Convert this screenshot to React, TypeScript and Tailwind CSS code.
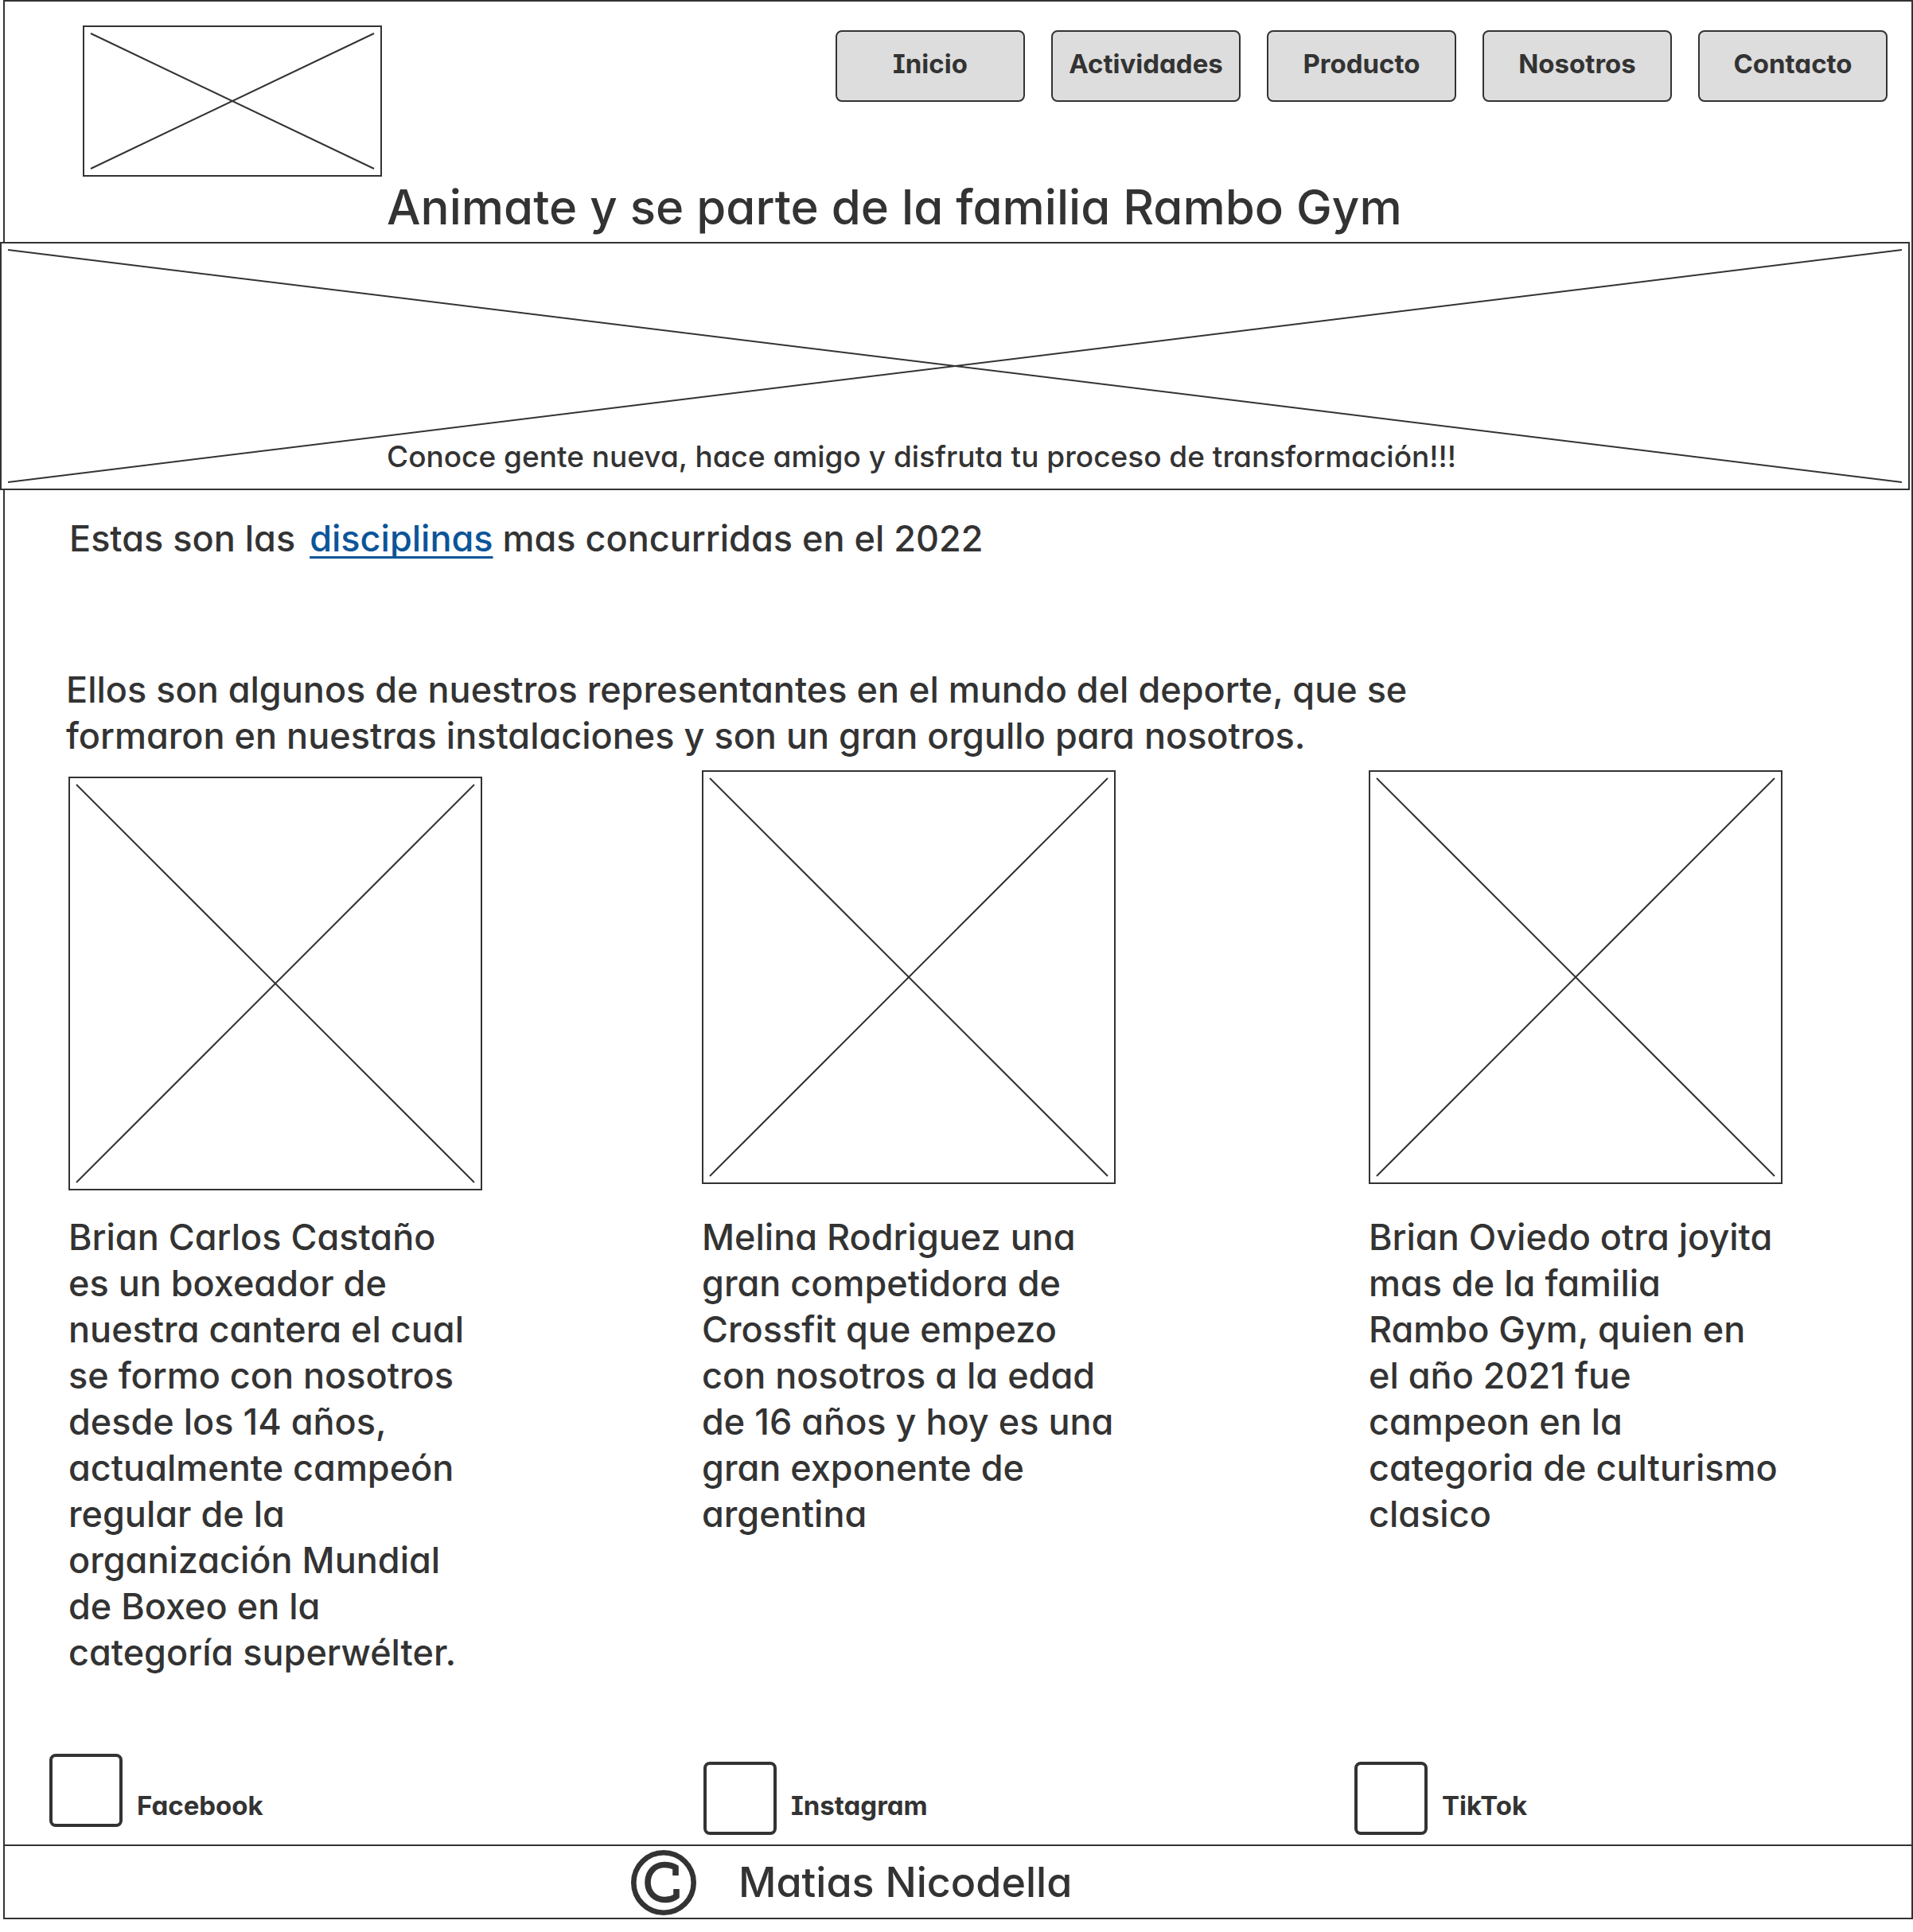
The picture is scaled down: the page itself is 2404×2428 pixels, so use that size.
import { useId } from "react";

const nav = ["Inicio", "Actividades", "Producto", "Nosotros", "Contacto"];

const athletes = [
  {
    name: "Brian Carlos Castaño",
    align: "items-end",
    lines: [
      "Brian Carlos Castaño",
      "es un boxeador de",
      "nuestra cantera el cual",
      "se formo con nosotros",
      "desde los 14 años,",
      "actualmente campeón",
      "regular de la",
      "organización Mundial",
      "de Boxeo en la",
      "categoría superwélter.",
    ],
  },
  {
    name: "Melina Rodriguez",
    align: "items-start",
    lines: [
      "Melina Rodriguez una",
      "gran competidora de",
      "Crossfit que empezo",
      "con nosotros a la edad",
      "de 16 años y hoy es una",
      "gran exponente de",
      "argentina",
    ],
  },
  {
    name: "Brian Oviedo",
    align: "items-start",
    lines: [
      "Brian Oviedo otra joyita",
      "mas de la familia",
      "Rambo Gym, quien en",
      "el año 2021 fue",
      "campeon en la",
      "categoria de culturismo",
      "clasico",
    ],
  },
];

const serifI = "[font-feature-settings:'cv11','cv08']";

function Placeholder({ label, className }: { label: string; className: string }) {
  return (
    <div role="img" aria-label={label} className={`border-2 border-[#333333] bg-white p-2 ${className}`}>
      <svg className="block h-full w-full overflow-visible" stroke="#333333" strokeWidth="2" aria-hidden="true">
        <line x1="0" y1="0" x2="100%" y2="100%" />
        <line x1="100%" y1="0" x2="0" y2="100%" />
      </svg>
    </div>
  );
}

function Social({ label, boxAlign }: { label: string; boxAlign: string }) {
  const id = useId();
  return (
    <div className="flex h-[102px] items-start">
      <input
        id={id}
        type="checkbox"
        className={`size-[92px] shrink-0 appearance-none rounded-lg border-4 border-[#333333] bg-white ${boxAlign}`}
      />
      <label htmlFor={id} className={`pt-[44px] pl-[18px] text-[33px] leading-[42px] font-bold ${serifI}`}>
        {label}
      </label>
    </div>
  );
}

export default function App() {
  return (
    <div className="bg-white font-['Inter',sans-serif] text-[#333333] [font-feature-settings:'cv11'] font-medium whitespace-nowrap">
      <div className="ml-1 border-2 border-[#333333]">
        <header className="flex justify-between pt-[30px] pr-[30px] pl-[98px]">
          <Placeholder label="Logo" className="h-[190px] w-[376px]" />
          <nav className="mt-[6px] flex h-[90px] gap-[33px]">
            {nav.map((item) => (
              <button
                key={item}
                type="button"
                className={`w-[238px] rounded-lg border-2 border-[#333333] bg-[#dddddd] pb-[6px] text-[33px] leading-[42px] font-bold ${serifI}`}
              >
                {item}
              </button>
            ))}
          </nav>
        </header>

        <h1 className="pb-[6px] pl-[480px] text-[60px] leading-[76px]">Animate y se parte de la familia Rambo Gym</h1>

        <section className="relative mr-[2px] -ml-[6px]">
          <Placeholder label="Banner" className="h-[312px]" />
          <p className="absolute bottom-[18px] left-[486px] text-[37px] leading-[48px]">
            Conoce gente nueva, hace amigo y disfruta tu proceso de transformación!!!
          </p>
        </section>

        <p className="pt-[32px] pl-[81px] text-[45px] leading-[58px]">
          Estas son las{" "}
          <a
            href="#disciplinas"
            className="ml-[6px] text-[#0b5599] underline decoration-[3px] underline-offset-[6px] [text-decoration-skip-ink:none]"
          >
            disciplinas
          </a>{" "}
          mas concurridas en el 2022
        </p>

        <p className="pt-[132px] pl-[77px] text-[45px] leading-[58px]">
          Ellos son algunos de nuestros representantes en el mundo del deporte, que se
          <br />
          formaron en nuestras instalaciones y son un gran orgullo para nosotros.
        </p>

        <main className="grid grid-cols-[796fr_838fr_682fr] pt-[14px] pl-[80px]">
          {athletes.map((a) => (
            <article key={a.name} className="h-[1236px]">
              <div className={`flex h-[528px] ${a.align}`}>
                <Placeholder label={a.name} className="size-[520px]" />
              </div>
              <p className="pt-[30px] text-[45px] leading-[58px]">
                {a.lines.map((line) => (
                  <span key={line} className="block">
                    {line}
                  </span>
                ))}
              </p>
            </article>
          ))}
        </main>

        <section className="grid grid-cols-[822fr_818fr_700fr] pl-[56px]">
          <Social label="Facebook" boxAlign="self-start" />
          <Social label="Instagram" boxAlign="self-end" />
          <Social label="TikTok" boxAlign="self-end" />
        </section>

        <footer className="mt-[12px] flex h-[92px] items-center border-t-2 border-[#333333] pt-[2px] pl-[786px]">
          <svg className="size-[84px]" viewBox="0 0 84 84" fill="none" stroke="#333333" aria-label="Copyright" role="img">
            <circle cx="42" cy="42" r="37.7" strokeWidth="6.6" />
            <path
              d="M57 33V23C53 20.5 48 19.5 43 19.5C30.5 19.5 22 29 22 41.5C22 54.5 31 63.5 43.5 63.5C49 63.5 54.5 62 58 59V50"
              strokeWidth="7.6"
            />
          </svg>
          <p className="pl-[52px] text-[52px] leading-[68px]">Matias Nicodella</p>
        </footer>
      </div>
    </div>
  );
}
